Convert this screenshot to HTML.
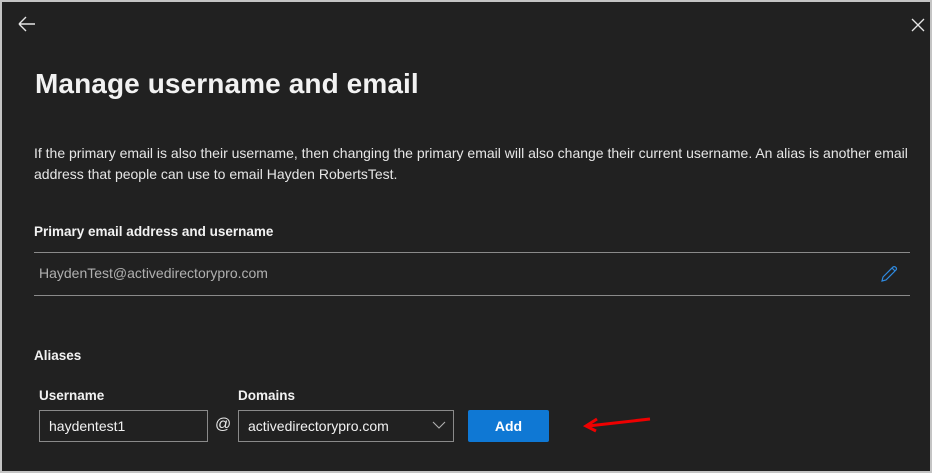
<!DOCTYPE html>
<html><head><style>
html,body{margin:0;padding:0}
body{width:932px;height:473px;background:#c4c4c4;font-family:"Liberation Sans",sans-serif;position:relative;overflow:hidden}
#p{position:absolute;left:2px;top:2px;width:928px;height:469px;background:#212121;color:#fff}
.a{position:absolute}
h1{position:absolute;left:33px;top:66px;margin:0;font-size:28px;font-weight:bold;color:#f2f2f2;letter-spacing:0.1px}
.t{font-size:14px;color:#e6e6e6;line-height:21px}
.b{font-size:13.5px;font-weight:bold;color:#f2f2f2}
.line{position:absolute;left:32px;width:876px;height:1px;background:#8a8a8a}
.in{position:absolute;border:1px solid #8a8a8a;box-sizing:border-box;height:32px;font-size:14px;color:#f2f2f2;line-height:30px;padding-left:9px}
</style></head><body><div id="p">
<svg class="a" style="left:15px;top:14px" width="20" height="16" viewBox="0 0 20 16"><path d="M2 8H18M2 8L9 1M2 8L9 15" stroke="#e6e6e6" stroke-width="1.4" fill="none"/></svg>
<svg class="a" style="left:909px;top:16px" width="14" height="14" viewBox="0 0 14 14"><path d="M1 1L13 13M13 1L1 13" stroke="#e6e6e6" stroke-width="1.3"/></svg>
<h1>Manage username and email</h1>
<div class="a t" style="left:32px;top:141px;width:880px">If the primary email is also their username, then changing the primary email will also change their current username. An alias is another email address that people can use to email Hayden RobertsTest.</div>
<div class="a b" style="left:32px;top:222px">Primary email address and username</div>
<div class="line" style="top:250px"></div>
<div class="a" style="left:37px;top:263px;font-size:14px;color:#b0b0b0">HaydenTest@activedirectorypro.com</div>
<svg class="a" style="left:878px;top:263px" width="18" height="18" viewBox="0 0 18 18"><path d="M2 16L3 12L13 2Q14.5 1 16 2.5Q17 4 16 5L6 15Z M12 3L15 6" stroke="#2f8ae0" stroke-width="1.2" fill="none"/></svg>
<div class="line" style="top:293px"></div>
<div class="a b" style="left:32px;top:346px">Aliases</div>
<div class="a b" style="left:37px;top:386px">Username</div>
<div class="a b" style="left:236px;top:386px">Domains</div>
<div class="in" style="left:37px;top:408px;width:169px">haydentest1</div>
<div class="a" style="left:213px;top:414px;font-size:16px;color:#e6e6e6">@</div>
<div class="in" style="left:236px;top:408px;width:216px">activedirectorypro.com</div>
<svg class="a" style="left:430px;top:419px" width="14" height="9" viewBox="0 0 14 9"><path d="M1 1L7 7L13 1" stroke="#b0b0b0" stroke-width="1.1" fill="none"/></svg>
<div class="a" style="left:466px;top:408px;width:81px;height:32px;background:#0f78d4;border-radius:2px;color:#fff;font-weight:bold;font-size:14px;text-align:center;line-height:32px">Add</div>
<svg class="a" style="left:580px;top:410px" width="72" height="24" viewBox="0 0 72 24"><path d="M68 7L6 14" stroke="#e00" stroke-width="3" fill="none"/><path d="M15 7L4 14L14 19" stroke="#e00" stroke-width="3" fill="none"/></svg>
</div></body></html>
